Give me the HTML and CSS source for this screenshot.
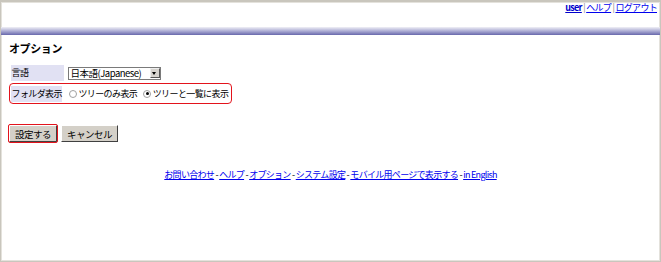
FILE: index.html
```html
<!DOCTYPE html>
<html lang="ja">
<head>
  <meta charset="UTF-8">
  <title>オプション</title>
  <link rel="stylesheet" href="styles.css">
</head>
<body>

<div class="frame">
  <div class="topnav">
    <a href="#" class="user">user</a> | <a href="#">ヘルプ</a> | <a href="#">ログアウト</a>
  </div>
  <div class="bar"></div>

  <div class="content">
    <h2>オプション</h2>
    <form>
      <div class="row">
        <div class="label">言語</div>
        <div class="value">
          <span class="select">日本語(Japanese)<span class="arrow"></span></span>
        </div>
      </div>
      <div class="row mark">
        <div class="label">フォルダ表示</div>
        <div class="value">
          <label><span class="radio"></span>ツリーのみ表示</label>
          <label><span class="radio on"></span>ツリーと一覧に表示</label>
        </div>
      </div>

      <div class="buttons">
        <button type="button" class="save">設定する</button>
        <button type="button">キャンセル</button>
      </div>
    </form>
  </div>

  <div class="footer">
    <a href="#">お問い合わせ</a> - <a href="#">ヘルプ</a> - <a href="#">オプション</a> - <a href="#">システム設定</a> - <a href="#">モバイル用ページで表示する</a> - <a href="#">in English</a>
  </div>
</div>

</body>
</html>
```

FILE: styles.css
```css
html, body {
  margin: 0;
  background: #fff;
}

body {
  font-family: "Noto Sans CJK JP", sans-serif;
  font-size: 9.5px;
  color: #000;
}

.frame {
  box-sizing: border-box;
  width: 661px;
  height: 262px;
  border: 1px solid #c9c6bd;
  border-top-width: 2px;
  box-shadow: inset 1px 1px 0 #e4e2dc, inset -1px -1px 0 #e4e2dc;
}

a {
  color: #0000ee;
}

.topnav {
  text-align: right;
  padding: 0 3px 0 0;
  height: 25px;
  line-height: 12px;
  font-size: 9px;
  letter-spacing: -0.7px;
  color: #888;
}

.topnav .user {
  font-weight: bold;
  color: #00c;
}

.bar {
  height: 8px;
  background: linear-gradient(#f0f0f6, #b4b4d8 45%, #6868ac);
}

.content {
  padding: 0 0 0 8px;
}

h2 {
  font-size: 11px;
  line-height: 14px;
  margin: 6px 0 9px;
  letter-spacing: -0.4px;
}

.row {
  display: flex;
  align-items: center;
  box-sizing: border-box;
  height: 18px;
  width: 223px;
  padding: 0 0 0 0.5px;
  border: 1.5px solid transparent;
  border-radius: 4px;
  white-space: nowrap;
  font-size: 9px;
  letter-spacing: -0.6px;
}

.row.mark {
  margin-top: 1px;
  height: 21px;
  border-color: #e3131c;
}

.label {
  width: 53px;
  height: 16px;
  line-height: 16px;
  padding-left: 1px;
  box-sizing: border-box;
  background: #e1e1f3;
}

.value {
  padding-left: 4px;
  display: flex;
  align-items: center;
}

.select {
  display: inline-flex;
  align-items: center;
  box-sizing: border-box;
  width: 93px;
  border: 1px solid #7a7a7a;
  height: 13px;
  padding-left: 2px;
  line-height: 11px;
  font-size: 9.5px;
  letter-spacing: -0.5px;
}

.arrow {
  width: 10px;
  height: 10px;
  margin-left: auto;
  margin-right: 0;
  background: #d6d3ce;
  border: 1px solid;
  border-color: #eee #555 #555 #eee;
  box-sizing: border-box;
  position: relative;
}

.arrow::after {
  content: "";
  position: absolute;
  left: 1.5px;
  top: 3px;
  border-left: 2.5px solid transparent;
  border-right: 2.5px solid transparent;
  border-top: 3px solid #000;
}

label {
  margin-right: 3px;
  display: inline-flex;
  align-items: center;
}

.radio {
  display: inline-block;
  width: 8px;
  height: 8px;
  box-sizing: border-box;
  border: 1px solid #a0a0a0;
  border-radius: 50%;
  margin: 0 1.5px 0 3px;
  position: relative;
}

.radio.on::after {
  content: "";
  position: absolute;
  left: 1.5px;
  top: 1.5px;
  width: 3px;
  height: 3px;
  border-radius: 50%;
  background: #000;
}

.buttons {
  margin-top: 21px;
  display: flex;
  gap: 4px;
}

button {
  font-family: "Noto Sans CJK JP", sans-serif;
  font-size: 9.5px;
  letter-spacing: -0.5px;
  background: #d4d0c8;
  border: 1px solid;
  border-color: #fff #404040 #404040 #fff;
  padding: 0 5px;
  height: 17px;
  line-height: 14px;
}

button.save {
  outline: 1.5px solid #e3131c;
  outline-offset: 0.5px;
  border-radius: 1px;
}

.footer {
  text-align: center;
  margin-top: 27px;
  font-size: 9px;
  line-height: 12px;
  letter-spacing: -0.7px;
}
```
